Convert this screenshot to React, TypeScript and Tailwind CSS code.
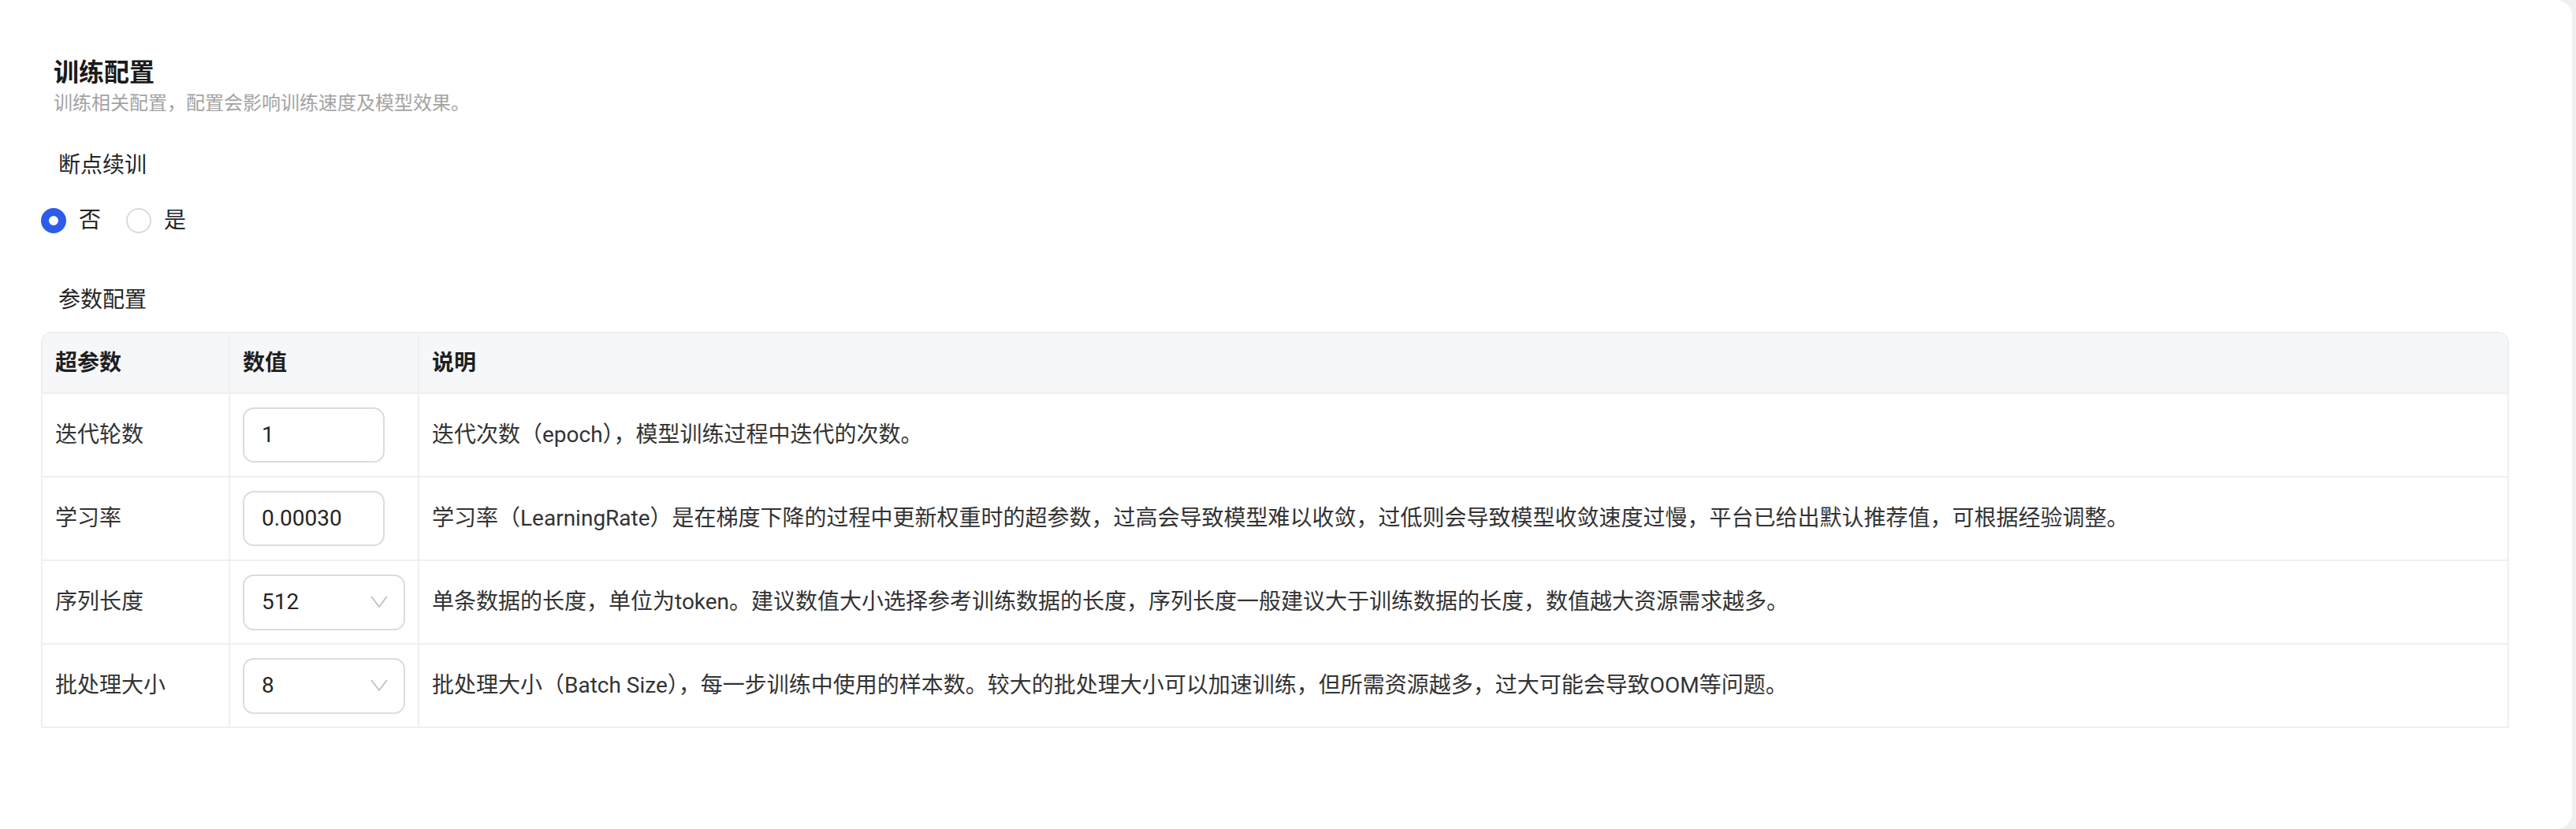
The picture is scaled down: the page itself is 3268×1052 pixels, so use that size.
import React from "react";

const rows = [
  {
    name: "迭代轮数",
    kind: "input",
    value: "1",
    desc: "迭代次数（epoch），模型训练过程中迭代的次数。",
  },
  {
    name: "学习率",
    kind: "input",
    value: "0.00030",
    desc: "学习率（LearningRate）是在梯度下降的过程中更新权重时的超参数，过高会导致模型难以收敛，过低则会导致模型收敛速度过慢，平台已给出默认推荐值，可根据经验调整。",
  },
  {
    name: "序列长度",
    kind: "select",
    value: "512",
    desc: "单条数据的长度，单位为token。建议数值大小选择参考训练数据的长度，序列长度一般建议大于训练数据的长度，数值越大资源需求越多。",
  },
  {
    name: "批处理大小",
    kind: "select",
    value: "8",
    desc: "批处理大小（Batch Size），每一步训练中使用的样本数。较大的批处理大小可以加速训练，但所需资源越多，过大可能会导致OOM等问题。",
  },
];

function Chevron() {
  return (
    <svg width="22" height="16" viewBox="0 0 22 16" fill="none">
      <polyline
        points="1.5,1.5 11,14 20.5,1.5"
        stroke="#c4c4c4"
        strokeWidth="2"
        strokeLinecap="round"
        strokeLinejoin="round"
      />
    </svg>
  );
}

export default function App() {
  return (
    <div className="flex h-[1052px] w-full bg-[#f0f0f0] font-[Roboto,'Noto_Sans_CJK_SC',sans-serif] text-[#262626]">
      <div className="mr-[5px] flex-1 rounded-r-[20px] bg-white pl-[52px] pr-[80px] pt-[70px]">
        <div className="pl-4 text-[32px] font-bold leading-[44px] text-[#1a1a1a]">训练配置</div>
        <div className="pl-4 text-[24px] leading-[34px] text-[#a3a3a3]">
          训练相关配置，配置会影响训练速度及模型效果。
        </div>

        <div className="mt-[42px] pl-[22px] text-[28px] leading-[40px] text-[#262626]">断点续训</div>

        <div className="mt-[30px] flex h-[40px] items-center text-[28px] text-[#262626]">
          <div className="flex items-center">
            <span className="h-8 w-8 rounded-full border-[10px] border-[#2c5ce9] bg-white" />
            <span className="ml-4">否</span>
          </div>
          <div className="ml-8 flex items-center">
            <span className="h-8 w-8 rounded-full border-2 border-[#dadada] bg-white" />
            <span className="ml-4">是</span>
          </div>
        </div>

        <div className="mt-[61px] pl-[22px] text-[28px] leading-[40px] text-[#262626]">参数配置</div>

        <div className="mt-[20px] overflow-hidden rounded-t-[14px] border-2 border-[#efefef] bg-white text-[28px]">
          <div className="grid h-[75px] grid-cols-[238px_240px_1fr] divide-x-2 divide-[#efefef] bg-[#f6f7f9] font-semibold text-[#1f1f1f]">
            <div className="flex items-center px-4">超参数</div>
            <div className="flex items-center px-4">数值</div>
            <div className="flex items-center px-4">说明</div>
          </div>
          {rows.map((r) => (
            <div
              key={r.name}
              className="grid h-[106px] grid-cols-[238px_240px_1fr] divide-x-2 divide-[#efefef] border-t-2 border-[#efefef] text-[#333333]"
            >
              <div className="flex items-center px-4">{r.name}</div>
              <div className="flex items-center px-4">
                {r.kind === "input" ? (
                  <div className="flex h-[70px] w-[180px] items-center rounded-[14px] border-2 border-[#dcdcdc] px-[22px] text-[#262626]">
                    {r.value}
                  </div>
                ) : (
                  <div className="flex h-[71px] w-[206px] items-center justify-between rounded-[14px] border-2 border-[#dcdcdc] pl-[22px] pr-[20px] text-[#262626]">
                    <span>{r.value}</span>
                    <Chevron />
                  </div>
                )}
              </div>
              <div className="flex items-center whitespace-nowrap px-4">{r.desc}</div>
            </div>
          ))}
        </div>
      </div>
    </div>
  );
}
